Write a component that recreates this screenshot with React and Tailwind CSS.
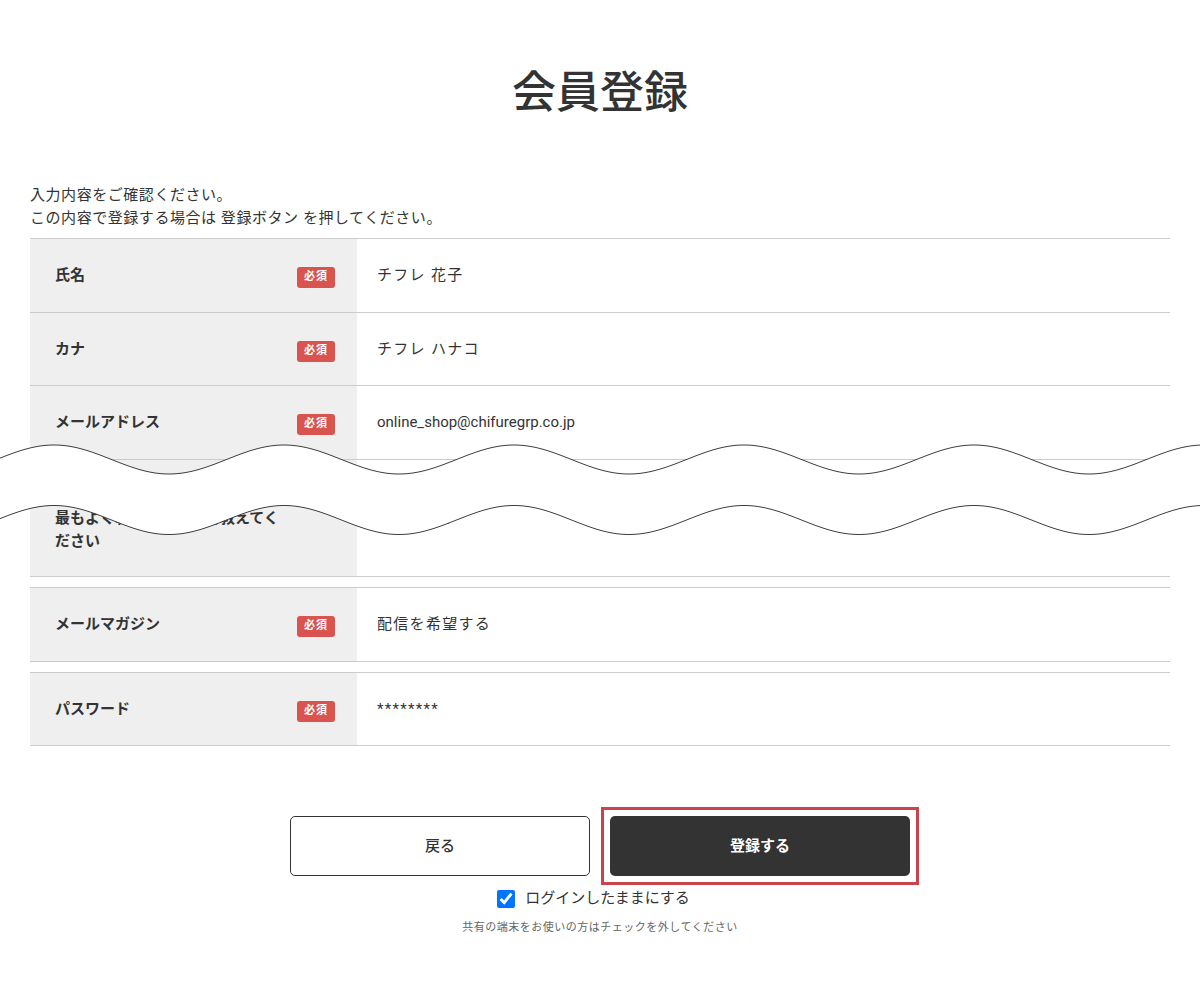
import React from "react";

const rows1 = [
  { label: "氏名", value: "チフレ 花子", required: true, height: "h-[74px]" },
  { label: "カナ", value: "チフレ ハナコ", required: true, height: "h-[73px]" },
  {
    label: "メールアドレス",
    value: "online_shop@chifuregrp.co.jp",
    required: true,
    latin: true,
    height: "h-[74px]",
  },
];

function Badge() {
  return (
    <span className="flex h-[21px] w-[38px] translate-y-[2px] items-center justify-center rounded-[3px] bg-[#d9534f] text-[11px] font-bold tracking-[1px] text-white">
      必須
    </span>
  );
}

function Row({ label, value, required, latin, height = "h-[73px]" }) {
  return (
    <div className={`flex border-b border-[#cccccc] ${height}`}>
      <div className="flex w-[327px] shrink-0 items-center justify-between bg-[#efefef] pl-[25px] pr-[22px]">
        <span className="text-[15px] font-bold leading-[23px]">{label}</span>
        {required ? <Badge /> : null}
      </div>
      <div
        className={`flex flex-1 items-center pl-[20px] text-[15px] leading-[23px] ${
          latin ? "" : "tracking-[1.3px]"
        }`}
      >
        {value}
      </div>
    </div>
  );
}

// wavy "cut" drawn over the omitted part of the form
function wavePoints(center) {
  const pts = [];
  for (let x = -10; x <= 1210; x += 2) {
    const y = center - 14.5 * Math.cos((2 * Math.PI * (x - 54)) / 230);
    pts.push([x, y]);
  }
  return pts;
}

function WaveCut() {
  const top = wavePoints(459.5);
  const bottom = wavePoints(520);
  const line = (pts) => "M" + pts.map(([x, y]) => `${x},${y.toFixed(2)}`).join(" L");
  const fill =
    line(top) +
    " L" +
    [...bottom].reverse().map(([x, y]) => `${x},${y.toFixed(2)}`).join(" L") +
    " Z";

  return (
    <svg
      className="pointer-events-none absolute left-0 top-0 h-[560px] w-[1200px]"
      viewBox="0 0 1200 560"
    >
      <path d={fill} fill="#ffffff" />
      <path d={line(top)} fill="none" stroke="#3d3d3d" strokeWidth="1" />
      <path d={line(bottom)} fill="none" stroke="#3d3d3d" strokeWidth="1" />
    </svg>
  );
}

export default function App() {
  return (
    <div className="relative min-h-screen w-full bg-white text-[#333333] [font-family:Roboto,'Noto_Sans_CJK_JP',sans-serif]">
      <div className="px-[30px]">
        <h1 className="pt-[60px] text-center text-[44px] font-medium leading-[66px]">会員登録</h1>

        <p className="mt-[58px] text-[15px] leading-[23px] tracking-[0.55px]">
          入力内容をご確認ください。
          <br />
          この内容で登録する場合は 登録ボタン を押してください。
        </p>

        <div className="mt-[8px] border-t border-[#cccccc]">
          {rows1.map((r) => (
            <Row key={r.label} {...r} />
          ))}
          <div className="flex h-[117px] border-b border-[#cccccc]">
            <div className="flex w-[327px] shrink-0 items-center bg-[#efefef] pl-[25px] pr-[22px]">
              <span className="whitespace-nowrap text-[15px] font-bold leading-[23px]">
                チフレ商品を購入する際に
                <br />
                最もよく利用するお店を教えてく
                <br />
                ださい
              </span>
            </div>
            <div className="flex flex-1 items-center pl-[20px] text-[15px] leading-[23px] tracking-[1.3px]">
              公式サイト
            </div>
          </div>
        </div>

        <div className="mt-[10px] border-t border-[#cccccc]">
          <Row label="メールマガジン" value="配信を希望する" required height="h-[74px]" />
        </div>

        <div className="mt-[10px] border-t border-[#cccccc]">
          <Row label="パスワード" value="********" required height="h-[73px]" />
        </div>

        <div className="mt-[70px] flex items-start justify-center gap-[20px]">
          <button className="h-[60px] w-[300px] rounded-[5px] border border-[#333333] bg-white text-[15px] font-medium">
            戻る
          </button>
          <div className="-m-[9px] border-3 border-[#c9444b] p-[6px]">
            <button className="block h-[60px] w-[300px] rounded-[5px] bg-[#333333] text-[15px] font-bold text-white">
              登録する
            </button>
          </div>
        </div>

        <label className="mt-[11px] flex items-center justify-center gap-[10px] pr-[13px] text-[15px] leading-[23px]">
          <input type="checkbox" defaultChecked className="h-[18px] w-[18px] accent-[#0075ff]" />
          ログインしたままにする
        </label>

        <p className="mt-[10px] text-center text-[11px] leading-[16px] tracking-[0.5px] text-[#666666]">
          共有の端末をお使いの方はチェックを外してください
        </p>
      </div>

      <WaveCut />
    </div>
  );
}
